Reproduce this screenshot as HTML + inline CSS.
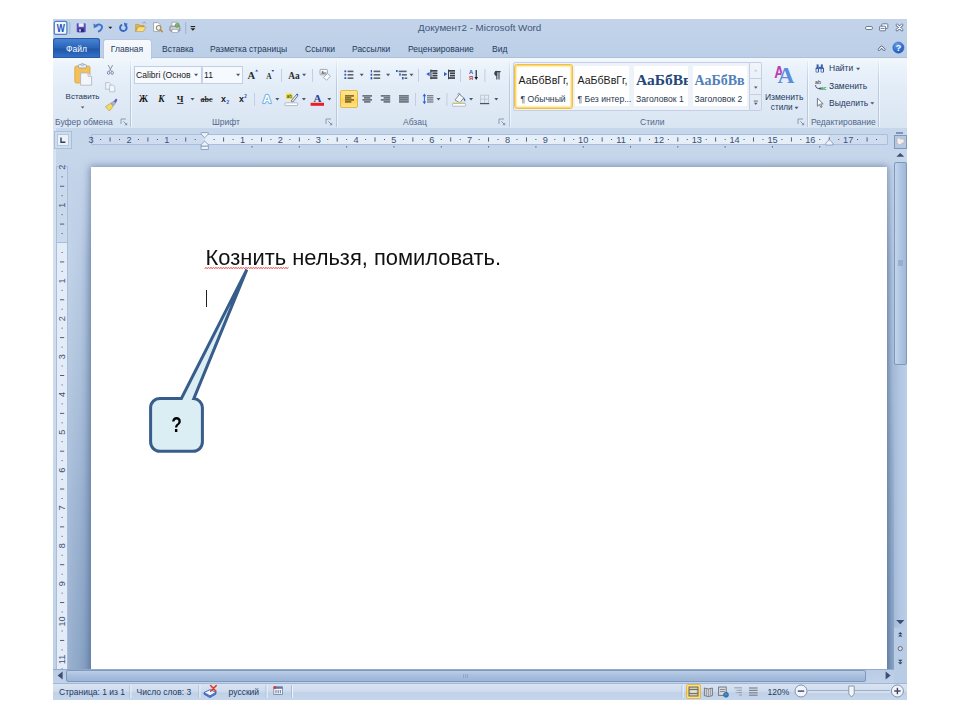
<!DOCTYPE html>
<html lang="ru">
<head>
<meta charset="utf-8">
<title>Документ2 - Microsoft Word</title>
<style>
html,body{margin:0;padding:0;}
body{width:960px;height:720px;background:#fff;position:relative;overflow:hidden;font-family:"Liberation Sans","DejaVu Sans",sans-serif;font-size:9px;color:#1e395b;}
.abs{position:absolute;}
#win{position:absolute;left:53px;top:19px;width:854px;height:681px;background:#bdd0e8;overflow:hidden;}
/* all children of #win positioned in page coordinates via this wrapper */
#w{position:absolute;left:-53px;top:-19px;width:960px;height:720px;}
#titlebar{left:53px;top:19px;width:854px;height:39px;background:linear-gradient(#c3d4ea,#bccfe7);}
#title{left:418px;top:23.2px;font-size:9.8px;color:#41587c;}
.tab{z-index:2;top:39px;height:20px;line-height:20px;font-size:8.5px;color:#1e395b;text-align:center;white-space:nowrap;}
#filetab{left:53px;width:47px;top:38px;height:20px;line-height:22px;border-radius:3px 3px 0 0;background:linear-gradient(#4a86d6 0%,#2a63b8 50%,#1f55a8 55%,#3474cc 100%);color:#fff;box-shadow:inset 0 0 0 1px #2a5aa5;}
#hometab{z-index:1;left:103px;width:48.5px;top:38.5px;height:20.5px;background:linear-gradient(#f6f9fd,#f0f5fb);border:1px solid #b5c8e1;border-bottom:none;border-radius:3px 3px 0 0;box-sizing:border-box;}
#ribbon{left:53px;top:57px;width:854px;height:71.5px;background:linear-gradient(#f3f8fd 0%,#eaf2fb 12%,#e3edf8 40%,#d9e5f2 100%);border-top:1px solid #a9bfdb;border-bottom:1px solid #9db3d1;box-sizing:border-box;}
.gsep{top:61px;width:1px;height:66px;background:linear-gradient(rgba(170,190,218,0.15),#bccbe1 35%,#b7c8df 85%,#b4c6de);box-shadow:1px 0 0 rgba(255,255,255,0.55);}
.glabel{top:116px;height:12px;line-height:12px;font-size:8.5px;color:#52688a;text-align:center;white-space:nowrap;}
.t{white-space:nowrap;line-height:1;}
</style>
</head>
<body>
<div id="win"><div id="w">
<!-- TITLE BAR -->
<div id="titlebar" class="abs"></div>
<div id="title" class="abs t">Документ2 - Microsoft Word</div>
<!-- QAT icons -->
<svg class="abs" style="left:53px;top:19px" width="150" height="20" viewBox="0 0 150 20">
  <!-- W logo -->
  <rect x="1.3" y="2.4" width="12.6" height="13" rx="1.6" fill="#f4f8fd" stroke="#5580c4" stroke-width="1.3"/>
  <text transform="translate(7.8 12.7) scale(0.86 1)" font-family="Liberation Sans, sans-serif" font-weight="bold" font-size="10" fill="#1b55b8" text-anchor="middle">W</text>
  <rect x="16.3" y="3" width="1" height="12" fill="#9fb4d2"/>
  <!-- save -->
  <g transform="translate(0.2 -0.8)">
  <rect x="23.5" y="5" width="9" height="9" rx="0.8" fill="#5a4fc0"/>
  <rect x="25.5" y="5" width="5" height="3.6" fill="#eef1fb"/>
  <rect x="25.3" y="10.3" width="5.4" height="3.7" fill="#2a2a78"/>
  <rect x="26" y="11" width="1.6" height="2.4" fill="#dfe3f5"/>
  </g>
  <!-- undo -->
  <path d="M43.6 6.2 C46.6 4.6 49.8 6.4 48.8 9.2 C48.3 10.6 47.3 11.6 45.8 12.4" fill="none" stroke="#3d74cf" stroke-width="1.9" stroke-linecap="round"/>
  <path d="M40.4 4.4 L40.9 9.2 L45.2 7.2 Z" fill="#3d74cf"/>
  <path d="M55.3 7.8 h4 l-2 2.3 z" fill="#222"/>
  <!-- redo -->
  <g transform="translate(1.3 -0.6)">
  <path d="M67.2 6.6 A3.3 3.3 0 1 0 71.3 6.9" fill="none" stroke="#3469c7" stroke-width="1.9" stroke-linecap="round"/>
  <path d="M69.6 4.3 L73.5 5.3 L70.6 8.5 Z" fill="#3469c7"/>
  </g>
  <!-- open folder -->
  <g transform="translate(0.2 -1.1)">
  <path d="M82.5 13.5 v-7 h3.2 l1 1.2 h4 v1.5 h-6.3 z" fill="#e3b84a" stroke="#b98a22" stroke-width="0.6"/>
  <path d="M82.6 13.6 l2.4 -4.6 h7.6 l-2.4 4.6 z" fill="#f8df87" stroke="#c19a33" stroke-width="0.6"/>
  <path d="M89.2 5.4 c1.4 -1.6 3 -1.2 3.4 0.2" fill="none" stroke="#7a8db0" stroke-width="0.8"/>
  </g>
  <!-- preview -->
  <g transform="translate(-0.9 -0.8) translate(101 4) scale(0.92) translate(-101 -4)">
  <path d="M101.5 4.5 h5 l2 2 v7.5 h-7 z" fill="#fdfdfd" stroke="#8b99ad" stroke-width="0.8"/>
  <circle cx="107" cy="10.2" r="2.6" fill="#e9f1fb" stroke="#8a6d2f" stroke-width="1"/>
  <path d="M109 12.2 l2 2.2" stroke="#b58a2a" stroke-width="1.5" stroke-linecap="round"/>
  </g>
  <!-- quick print -->
  <g transform="translate(-0.6 -1.3)">
  <rect x="117.5" y="8.4" width="10" height="5" rx="1" fill="#c9cdd6" stroke="#6f7785" stroke-width="0.8"/>
  <path d="M119.5 8.3 v-3.8 h5.5 l1 1 v2.8 z" fill="#fff" stroke="#8b93a3" stroke-width="0.7"/>
  <rect x="119.6" y="11.6" width="6" height="3.2" fill="#fff" stroke="#8b93a3" stroke-width="0.6"/>
  <circle cx="124.8" cy="7.6" r="2.1" fill="#7bb661" stroke="#4b8a3a" stroke-width="0.5"/>
  </g>
  <rect x="132.2" y="3" width="1" height="12" fill="#9fb4d2"/>
  <!-- customize -->
  <rect x="137.6" y="7" width="4.6" height="1.1" fill="#222"/>
  <path d="M137.4 9.2 h5 l-2.5 2.6 z" fill="#222"/>
</svg>
<!-- window controls -->
<svg class="abs" style="left:860px;top:19px" width="47" height="39" viewBox="0 0 47 39">
  <rect x="5.5" y="7.5" width="7" height="3" rx="1.4" fill="#fff" stroke="#5d6f8c" stroke-width="0.9"/>
  <rect x="21.8" y="4.8" width="6" height="4.6" rx="0.6" fill="#fff" stroke="#5d6f8c" stroke-width="0.9"/>
  <rect x="19.6" y="7.2" width="6" height="4.6" rx="0.6" fill="#fff" stroke="#5d6f8c" stroke-width="0.9"/>
  <rect x="20.6" y="8.9" width="4" height="0.9" fill="#5d6f8c"/>
  <path d="M37 5.9 L42 10.9 M42 5.9 L37 10.9" stroke="#5d6f8c" stroke-width="2.8" stroke-linecap="round"/>
  <path d="M37 5.9 L42 10.9 M42 5.9 L37 10.9" stroke="#fff" stroke-width="1.3" stroke-linecap="round"/>
  <path d="M19 30.6 L21.6 28 L24.2 30.6" fill="none" stroke="#4d5f7c" stroke-width="2.6" stroke-linecap="round" stroke-linejoin="round"/>
  <path d="M19 30.6 L21.6 28 L24.2 30.6" fill="none" stroke="#fff" stroke-width="1.1" stroke-linecap="round" stroke-linejoin="round"/>
  <defs><radialGradient id="hg" cx="0.4" cy="0.3" r="0.8"><stop offset="0" stop-color="#6fa3ea"/><stop offset="0.6" stop-color="#2f6fd0"/><stop offset="1" stop-color="#1d4fa8"/></radialGradient></defs>
  <circle cx="38.4" cy="28.6" r="5.6" fill="url(#hg)" stroke="#2a5db5" stroke-width="0.5"/>
  <text x="38.4" y="32" font-family="Liberation Sans, sans-serif" font-weight="bold" font-size="9" fill="#fff" text-anchor="middle">?</text>
</svg>

<!--TABS-->
<div id="filetab" class="abs tab">Файл</div>
<div id="hometab" class="abs"></div>
<div class="abs tab" style="left:103px;width:48px;">Главная</div>
<div class="abs tab" style="left:162px;">Вставка</div>
<div class="abs tab" style="left:210px;">Разметка страницы</div>
<div class="abs tab" style="left:305px;">Ссылки</div>
<div class="abs tab" style="left:352px;">Рассылки</div>
<div class="abs tab" style="left:408px;">Рецензирование</div>
<div class="abs tab" style="left:492px;">Вид</div>
<!--RIBBON-->
<div id="ribbon" class="abs"></div>
<!-- group separators -->
<div class="abs gsep" style="left:130px"></div>
<div class="abs gsep" style="left:336.3px"></div>
<div class="abs gsep" style="left:509px"></div>
<div class="abs gsep" style="left:807px"></div>
<div class="abs gsep" style="left:878px"></div>
<!-- group labels -->
<div class="abs glabel" style="left:55px">Буфер обмена</div>
<div class="abs glabel" style="left:212px">Шрифт</div>
<div class="abs glabel" style="left:403px">Абзац</div>
<div class="abs glabel" style="left:640px">Стили</div>
<div class="abs glabel" style="left:811px">Редактирование</div>
<!-- dialog launchers -->
<svg class="abs" style="left:0;top:0;pointer-events:none" width="960" height="130" viewBox="0 0 960 130">
  <g id="launch" fill="none" stroke="#8393ab" stroke-width="0.9">
    <path d="M0 5 V0 H5"/><path d="M2.4 2.4 L5.6 5.6" stroke-width="1"/><path d="M6.2 3.4 V6.2 H3.4 Z" fill="#8393ab" stroke="none"/>
  </g>
  <use href="#launch" x="121" y="119"/>
  <use href="#launch" x="326" y="119"/>
  <use href="#launch" x="499" y="119"/>
  <use href="#launch" x="798" y="119"/>
</svg>
<!-- CLIPBOARD GROUP -->
<svg class="abs" style="left:53px;top:58px" width="80" height="70" viewBox="0 0 80 70">
  <!-- paste clipboard -->
  <rect x="21.8" y="8" width="15.2" height="17" rx="1.6" fill="#f3c15b" stroke="#d9a23c" stroke-width="0.8"/>
  <rect x="25.4" y="6.6" width="8" height="3.4" rx="1" fill="#e9edf2" stroke="#8d97a6" stroke-width="0.7"/>
  <rect x="28" y="5.4" width="2.8" height="2" rx="0.8" fill="#cfd6df" stroke="#8d97a6" stroke-width="0.5"/>
  <path d="M27.6 15 h7.4 l3.6 3.6 v8.6 h-11 z" fill="#f4f6fa" stroke="#aab3c2" stroke-width="0.8"/>
  <path d="M35 15 v3.6 h3.6" fill="#dfe4ec" stroke="#aab3c2" stroke-width="0.6"/>
  <!-- paste arrow -->
  <path d="M27.8 48.4 h3.6 l-1.8 2.2 z" fill="#4a566b"/>
  <!-- cut -->
  <g transform="translate(0 -2.4)">
  <g stroke="#8b95a6" fill="none" stroke-width="1">
    <path d="M55.2 9.4 L58.4 15.6 M59.6 9.4 L56.4 15.6"/>
    <ellipse cx="55.6" cy="17.2" rx="1.2" ry="1.6" stroke="#7f8ba8"/>
    <ellipse cx="59.2" cy="17.2" rx="1.2" ry="1.6" stroke="#7f8ba8"/>
  </g>
  </g>
  <!-- copy -->
  <g transform="translate(0 -2.4)">
  <path d="M52.6 27 h3.6 l1.6 1.6 v5 h-5.2 z" fill="#eef1f6" stroke="#a9b3c4" stroke-width="0.7"/>
  <path d="M56.6 29.6 h3.6 l1.6 1.6 v5 h-5.2 z" fill="#f4f6fa" stroke="#a9b3c4" stroke-width="0.7"/>
  </g>
  <!-- format painter -->
  <path d="M52.4 48.6 l5.4 -3.4 l2.4 3.2 l-3.8 4.6 z" fill="#f2d76a" stroke="#b9992f" stroke-width="0.6"/>
  <path d="M58 45 l2.6 -1.8 l1.8 2.6 l-2.4 2 z" fill="#aeb4c2" stroke="#7d8597" stroke-width="0.5"/>
  <path d="M60.8 43.2 l2.2 -2.6 l1.4 1.2 l-1.6 3.2 z" fill="#5b55b8"/>
</svg>
<div class="abs t" style="left:65.6px;top:93.2px;font-size:8px;color:#1e395b">Вставить</div>
<!-- FONT GROUP -->
<div class="abs" style="left:133.6px;top:66px;width:68px;height:18px;box-sizing:border-box;border:1px solid #c0cfe4;background:#f6f9fd;"></div>
<div class="abs" style="left:201.6px;top:66px;width:41.4px;height:18px;box-sizing:border-box;border:1px solid #c0cfe4;border-left:1px solid #c9d6e8;background:#f6f9fd;"></div>
<div class="abs t" style="left:136px;top:70.5px;font-size:8.6px;color:#1a1a1a">Calibri (Основ</div>
<div class="abs t" style="left:204px;top:70.5px;font-size:8.6px;color:#1a1a1a">11</div>
<svg class="abs" style="left:131px;top:58px" width="206" height="70" viewBox="0 0 206 70">
  <g fill="#4a566b">
    <path d="M63.1 15.8 h4 l-2 2.4 z"/>
    <path d="M105.1 15.8 h4 l-2 2.4 z"/>
    <path d="M59.5 40.0 h4 l-2 2.4 z"/>
    <path d="M144.3 40.0 h4 l-2 2.4 z"/>
    <path d="M170.9 40.0 h4 l-2 2.4 z"/>
    <path d="M196.3 40.0 h4 l-2 2.4 z"/>
    <path d="M171.1 15.8 h4 l-2 2.4 z"/>
  </g>
  <!-- small separators -->
  <g fill="#c2cfe2">
    <rect x="150" y="11" width="1" height="13"/>
    <rect x="181" y="11" width="1" height="13"/>
    <rect x="123" y="35" width="1" height="13"/>
  </g>
  <!-- grow/shrink font -->
  <text x="120.4" y="21.2" font-family="Liberation Serif, serif" font-weight="bold" font-size="10.6" fill="#2b2b2b" text-anchor="middle">A</text>
  <path d="M124.2 13.6 h3 l-1.5 -2 z" fill="#2f55b5"/>
  <text x="137.8" y="21.2" font-family="Liberation Serif, serif" font-weight="bold" font-size="7.4" fill="#2b2b2b" text-anchor="middle">A</text>
  <path d="M140.4 12 h3 l-1.5 2 z" fill="#2f55b5"/>
  <!-- Aa -->
  <text x="163" y="20.8" font-family="Liberation Serif, serif" font-weight="bold" font-size="9.4" fill="#2b2b2b" text-anchor="middle">Aa</text>
  <!-- clear formatting -->
  <rect x="189" y="11.4" width="7.4" height="5.4" rx="0.8" fill="#f6f8fc" stroke="#7f8aa0" stroke-width="0.7"/>
  <text x="192.7" y="15.8" font-family="Liberation Sans, sans-serif" font-size="4.2" fill="#333" text-anchor="middle">Aa</text>
  <path d="M192.4 19.6 l4 -4 l3 2.4 l-3.6 4.2 z" fill="#fdfdfd" stroke="#8a93a8" stroke-width="0.7"/>
  <!-- B I U -->
  <text x="12.3" y="44.4" font-family="Liberation Serif, serif" font-weight="bold" font-size="9.4" fill="#1a1a1a" text-anchor="middle">Ж</text>
  <text x="30.4" y="44.4" font-family="Liberation Serif, serif" font-weight="bold" font-style="italic" font-size="9.4" fill="#1a1a1a" text-anchor="middle">К</text>
  <text x="49.2" y="43.6" font-family="Liberation Serif, serif" font-weight="bold" font-size="9.2" fill="#1a1a1a" text-anchor="middle">Ч</text>
  <rect x="46" y="44.9" width="6.4" height="0.9" fill="#1a1a1a"/>
  <!-- strikethrough abc -->
  <text x="75.6" y="44.2" font-family="Liberation Serif, serif" font-weight="bold" font-size="8" fill="#2b2b2b" text-anchor="middle">abc</text>
  <rect x="69.6" y="41" width="12" height="0.8" fill="#2b2b2b"/>
  <!-- sub/superscript -->
  <text x="92.4" y="44.2" font-family="Liberation Sans, sans-serif" font-weight="bold" font-size="8.8" fill="#1a1a1a" text-anchor="middle">x</text>
  <text x="96.8" y="46" font-family="Liberation Sans, sans-serif" font-weight="bold" font-size="4.6" fill="#2f55b5" text-anchor="middle">2</text>
  <text x="110.4" y="44.2" font-family="Liberation Sans, sans-serif" font-weight="bold" font-size="8.8" fill="#1a1a1a" text-anchor="middle">x</text>
  <text x="114.6" y="40.4" font-family="Liberation Sans, sans-serif" font-weight="bold" font-size="4.6" fill="#2f55b5" text-anchor="middle">2</text>
  <!-- text effects A -->
  <text x="136" y="45.4" font-family="Liberation Sans, sans-serif" font-weight="bold" font-size="11.6" fill="#b9dcf5" stroke="#b9dcf5" stroke-width="3.2" text-anchor="middle" stroke-linejoin="round" opacity="0.55">A</text><text x="136" y="45.4" font-family="Liberation Sans, sans-serif" font-weight="bold" font-size="11.6" fill="#ffffff" stroke="#62a8e0" stroke-width="1.7" paint-order="stroke" text-anchor="middle" stroke-linejoin="round">A</text>
  <!-- highlight -->
  <rect x="155" y="35.6" width="6.6" height="5.4" fill="#f1e434"/>
  <text x="158.3" y="40.2" font-family="Liberation Sans, sans-serif" font-size="5" fill="#333" text-anchor="middle">ab</text>
  <path d="M160 43 l5.6 -6.6 l1.4 1.2 l-5.2 6.4 z" fill="#e6eaf2" stroke="#3d4f78" stroke-width="0.7"/>
  <path d="M165 36.6 l1.2 -1.2 l1.2 1 l-1 1.4 z" fill="#3763c2"/>
  <rect x="154" y="44.8" width="12.6" height="2.8" rx="0.6" fill="#fdfdfd" stroke="#9aa3b3" stroke-width="0.7"/>
  <!-- font color -->
  <text x="186.4" y="43.6" font-family="Liberation Serif, serif" font-weight="bold" font-size="11" fill="#24448c" text-anchor="middle">A</text>
  <rect x="179.6" y="44.8" width="13.4" height="3" fill="#ee1c25"/>
</svg>

<!-- PARAGRAPH GROUP -->
<div class="abs" style="left:340px;top:90px;width:18px;height:18px;box-sizing:border-box;border:1px solid #e5b84a;border-radius:2px;background:linear-gradient(#fde68f,#fddb70 45%,#fcd258 52%,#fde286);"></div>
<svg class="abs" style="left:336px;top:58px" width="174" height="70" viewBox="0 0 174 70">
  <g fill="#4a566b">
    <path d="M23.7 15.8 h4 l-2 2.4 z"/>
    <path d="M50.1 15.8 h4 l-2 2.4 z"/>
    <path d="M73.5 15.8 h4 l-2 2.4 z"/>
    <path d="M100.5 40.0 h4 l-2 2.4 z"/>
    <path d="M133.1 40.0 h4 l-2 2.4 z"/>
    <path d="M158.3 40.0 h4 l-2 2.4 z"/>
  </g>
  <g fill="#c2cfe2">
    <rect x="82" y="11" width="1" height="13"/>
    <rect x="124" y="11" width="1" height="13"/>
    <rect x="148.4" y="11" width="1" height="13"/>
    <rect x="79" y="35" width="1" height="13"/>
    <rect x="110.4" y="35" width="1" height="13"/>
  </g>
  <!-- bullets -->
  <g fill="#2f55b5"><rect x="8.4" y="12.4" width="1.8" height="1.8"/><rect x="8.4" y="15.8" width="1.8" height="1.8"/><rect x="8.4" y="19.2" width="1.8" height="1.8"/></g>
  <g fill="#5d6470"><rect x="11.6" y="12.6" width="5.8" height="1.6"/><rect x="11.6" y="16" width="5.8" height="1.6"/><rect x="11.6" y="19.4" width="5.8" height="1.6"/></g>
  <!-- numbering -->
  <g fill="#2f55b5"><rect x="34.8" y="12" width="1.2" height="2.4"/><rect x="34.6" y="15.6" width="1.6" height="2.2"/><rect x="34.6" y="19" width="1.6" height="2.4"/></g>
  <g fill="#5d6470"><rect x="37.6" y="12.6" width="6.6" height="1.6"/><rect x="37.6" y="16" width="6.6" height="1.6"/><rect x="37.6" y="19.4" width="6.6" height="1.6"/></g>
  <!-- multilevel -->
  <g fill="#2f55b5"><rect x="60" y="12" width="1.6" height="2"/><rect x="63.2" y="15.4" width="1.6" height="2.2"/><rect x="66" y="19" width="1.6" height="2.4"/></g>
  <g fill="#5d6470"><rect x="62.6" y="12.6" width="8" height="1.6"/><rect x="65.8" y="16" width="5" height="1.6"/><rect x="68.6" y="19.4" width="2.6" height="1.6"/></g>
  <!-- outdent -->
  <g fill="#3f434c"><rect x="94.4" y="12" width="7" height="1.7"/><rect x="96.4" y="14.4" width="5" height="1.7"/><rect x="96.4" y="16.8" width="5" height="1.7"/><rect x="94.4" y="19.2" width="7" height="1.7"/><rect x="94.4" y="11.6" width="1.1" height="9.6"/></g>
  <path d="M93.6 13.9 v4.4 l-3.4 -2.2 z" fill="#2a62d8"/>
  <!-- indent -->
  <g fill="#3f434c"><rect x="112" y="12" width="7" height="1.7"/><rect x="114" y="14.4" width="5" height="1.7"/><rect x="114" y="16.8" width="5" height="1.7"/><rect x="112" y="19.2" width="7" height="1.7"/><rect x="112" y="11.6" width="1.1" height="9.6"/></g>
  <path d="M108 13.9 v4.4 l3.4 -2.2 z" fill="#2a62d8"/>
  <!-- sort -->
  <text x="135" y="16.4" font-family="Liberation Sans, sans-serif" font-weight="bold" font-size="5.8" fill="#2f55b5" text-anchor="middle">А</text>
  <text x="135" y="22" font-family="Liberation Sans, sans-serif" font-weight="bold" font-size="5.8" fill="#b33a3a" text-anchor="middle">Я</text>
  <path d="M140.2 12 v8" stroke="#1a1a1a" stroke-width="1.1"/><path d="M138.4 19 h3.6 l-1.8 3 z" fill="#1a1a1a"/>
  <!-- pilcrow -->
  <g transform="translate(-1.2 0.6)"><path d="M162 21 v-8 M164.2 21 v-8 M160.4 13 h5.4" stroke="#3d424c" stroke-width="1.1" fill="none"/>
  <path d="M162 12.5 a2.3 2.3 0 0 0 0 4.6 z" fill="#3d424c" stroke="#3d424c" stroke-width="0.6"/></g>
  <!-- align left (selected) -->
  <g fill="#6b5520"><rect x="9" y="37.2" width="9" height="1.4"/><rect x="9" y="39.2" width="6.4" height="1.4"/><rect x="9" y="41.2" width="9" height="1.4"/><rect x="9" y="43.2" width="6.4" height="1.4"/></g>
  <!-- center -->
  <g fill="#555b66"><rect x="26.4" y="37.2" width="9.6" height="1.4"/><rect x="28" y="39.2" width="6.4" height="1.4"/><rect x="26.4" y="41.2" width="9.6" height="1.4"/><rect x="28" y="43.2" width="6.4" height="1.4"/></g>
  <!-- right -->
  <g fill="#555b66"><rect x="44.8" y="37.2" width="9.4" height="1.4"/><rect x="47.6" y="39.2" width="6.6" height="1.4"/><rect x="44.8" y="41.2" width="9.4" height="1.4"/><rect x="47.6" y="43.2" width="6.6" height="1.4"/></g>
  <!-- justify -->
  <g fill="#555b66"><rect x="63" y="37.2" width="9.8" height="1.4"/><rect x="63" y="39.2" width="9.8" height="1.4"/><rect x="63" y="41.2" width="9.8" height="1.4"/><rect x="63" y="43.2" width="9.8" height="1.4"/></g>
  <!-- line spacing -->
  <g fill="#7d838e"><rect x="91" y="37.0" width="6.4" height="1.4"/><rect x="91" y="39.1" width="6.4" height="1.4"/><rect x="91" y="41.2" width="6.4" height="1.4"/><rect x="91" y="43.3" width="6.4" height="1.4"/></g>
  <path d="M88.4 35.6 l1.8 2.6 h-3.6 z M88.4 46.2 l1.8 -2.6 h-3.6 z" fill="#2a62d8"/><rect x="87.9" y="38" width="1" height="6" fill="#2a62d8"/>
  <!-- shading -->
  <path d="M119 42 l4.4 -5.6 l4.4 3.4 l-4 5 z" fill="#f4f6fa" stroke="#6a7487" stroke-width="0.8"/>
  <path d="M127.6 40 c1.6 0.4 2 2 1.6 3.6 c-1 -0.8 -2 -2 -1.6 -3.6z" fill="#2a62d8"/>
  <path d="M121.6 36.8 c0.4 -2 2.6 -2 2.6 0" fill="none" stroke="#6a7487" stroke-width="0.7"/>
  <rect x="117" y="44.4" width="12" height="1.2" fill="#f1e434"/>
  <rect x="116.4" y="45.4" width="13.2" height="2.8" rx="0.6" fill="#fdfdfd" stroke="#9aa3b3" stroke-width="0.7"/>
  <!-- borders -->
  <g stroke="#b9c1ce" stroke-width="0.8" fill="none"><rect x="144.6" y="37.2" width="8" height="8"/><path d="M148.6 37.2 v8 M144.6 41.2 h8"/></g>
  <rect x="144" y="45" width="9.2" height="1.2" fill="#4d525c"/>
</svg>
<!-- STYLES GROUP -->
<div class="abs" style="left:513px;top:62px;width:237px;height:49px;box-sizing:border-box;border:1px solid #c3d0e4;border-radius:2px 0 0 2px;background:#eef3fa;"></div>
<div class="abs" style="left:514px;top:63.5px;width:58.6px;height:45px;box-sizing:border-box;border:1.2px solid #efbe42;border-radius:2.5px;background:#fff;box-shadow:inset 0 0 0 1.3px #fbd96e, inset 0 0 3px 1px #fde9a8;"></div>
<div class="abs" style="left:575px;top:66px;width:54px;height:40px;background:#fff;"></div>
<div class="abs" style="left:634px;top:66px;width:54px;height:40px;background:#fff;overflow:hidden"><div class="abs t" style="left:2px;top:6px;font-family:'Liberation Serif','DejaVu Serif',serif;font-weight:bold;font-size:15.5px;color:#1f497d;">АаБбВв</div></div>
<div class="abs" style="left:692.5px;top:66px;width:54px;height:40px;background:#fff;overflow:hidden"><div class="abs t" style="left:2px;top:7.5px;font-family:'Liberation Serif','DejaVu Serif',serif;font-weight:bold;font-size:14px;color:#4f81bd;">АаБбВв</div></div>
<div class="abs" style="left:516px;top:66px;width:55px;height:40px;overflow:hidden"><div class="abs t" style="left:2.5px;top:9px;font-size:10.6px;color:#1a1a1a;">АаБбВвГг,</div></div>
<div class="abs" style="left:575px;top:66px;width:54px;height:40px;overflow:hidden"><div class="abs t" style="left:2.5px;top:9px;font-size:10.6px;color:#1a1a1a;">АаБбВвГг,</div></div>
<div class="abs t" style="left:520.5px;top:94.8px;font-size:8.65px;color:#2b3a52;">¶ Обычный</div>
<div class="abs t" style="left:577.5px;top:94.8px;font-size:8.65px;color:#2b3a52;">¶ Без интер...</div>
<div class="abs t" style="left:636px;top:94.8px;font-size:8.65px;color:#2b3a52;">Заголовок 1</div>
<div class="abs t" style="left:694.5px;top:94.8px;font-size:8.65px;color:#2b3a52;">Заголовок 2</div>
<!-- gallery scroll buttons -->
<div class="abs" style="left:750px;top:62px;width:11.5px;height:49px;box-sizing:border-box;border:1px solid #c3d0e4;border-left:none;border-radius:0 2px 2px 0;background:linear-gradient(#f1f5fb,#dfe8f4);"></div>
<div class="abs" style="left:750px;top:78px;width:11px;height:1px;background:#c3d0e4"></div>
<div class="abs" style="left:750px;top:94px;width:11px;height:1px;background:#c3d0e4"></div>
<svg class="abs" style="left:750px;top:62px" width="12" height="49" viewBox="0 0 12 49">
  <path d="M4 9.4 h3.6 l-1.8 -2.2 z" fill="#c5cddb"/>
  <path d="M4 24.6 h3.6 l-1.8 2.2 z" fill="#4d596d"/>
  <rect x="3.8" y="38.6" width="4" height="0.9" fill="#4d596d"/>
  <path d="M4 40.8 h3.6 l-1.8 2.2 z" fill="#4d596d"/>
</svg>
<!-- change styles -->
<svg class="abs" style="left:770px;top:62px" width="30" height="26" viewBox="0 0 30 26">
  <text transform="translate(9.2 16) scale(0.78 1)" font-family="Liberation Sans, sans-serif" font-weight="bold" font-size="17.4" fill="#b63fb4" text-anchor="middle">A</text>
  <text x="16" y="21.4" font-family="Liberation Serif, serif" font-weight="bold" font-size="23.4" fill="#5a8ddb" stroke="#eef4fb" stroke-width="0.7" paint-order="stroke" text-anchor="middle">A</text>
</svg>
<div class="abs t" style="left:765px;top:92.6px;font-size:8.5px;color:#1e395b">Изменить</div>
<div class="abs t" style="left:770.8px;top:103.6px;font-size:8.2px;color:#1e395b">стили</div>
<svg class="abs" style="left:794px;top:106px" width="6" height="5" viewBox="0 0 6 5"><path d="M0.5 0.8 h4 l-2 2.4 z" fill="#4a566b"/></svg>
<!-- EDITING GROUP -->
<div class="abs t" style="left:829px;top:64.4px;font-size:8.5px;color:#1e395b">Найти</div>
<div class="abs t" style="left:829px;top:81.6px;font-size:8.5px;color:#1e395b">Заменить</div>
<div class="abs t" style="left:829px;top:98.6px;font-size:8.5px;color:#1e395b">Выделить</div>
<svg class="abs" style="left:812px;top:60px" width="66" height="52" viewBox="0 0 66 52">
  <path d="M44.1 7.8 h4 l-2 2.4 z M58.3 42.2 h4 l-2 2.4 z" fill="#4a566b"/>
  <!-- binoculars -->
  <g fill="#3d5ea8"><rect x="3.6" y="7.6" width="3.4" height="5" rx="0.8"/><rect x="8.6" y="7.6" width="3.4" height="5" rx="0.8"/><rect x="4.6" y="4.4" width="2" height="4"/><rect x="8.8" y="4.4" width="2" height="4"/><rect x="6.6" y="6.8" width="2.4" height="2"/></g>
  <rect x="4.4" y="9" width="1.6" height="2.8" fill="#dfe8f7"/><rect x="9.4" y="9" width="1.6" height="2.8" fill="#dfe8f7"/>
  <!-- replace -->
  <text x="6" y="23.6" font-family="Liberation Sans, sans-serif" font-size="5.4" fill="#333" text-anchor="middle">ab</text>
  <path d="M3.6 25 c0 3 1.6 3.6 4.4 3.6" fill="none" stroke="#3d4a66" stroke-width="0.9"/>
  <path d="M7.6 27 l2 1.6 l-2 1.6 z" fill="#3d4a66"/>
  <text x="11.6" y="30.4" font-family="Liberation Sans, sans-serif" font-weight="bold" font-size="5" fill="#2f9a3a" text-anchor="middle">ac</text>
  <!-- select cursor -->
  <path d="M5.4 38.2 v8 l2 -1.8 l1.5 3.1 l1.2 -0.6 l-1.5 -3 h2.6 z" fill="#fff" stroke="#555e70" stroke-width="0.8" stroke-linejoin="round"/>
</svg>

<!--RULER_START-->
<div class="abs" style="left:53px;top:128px;width:854px;height:24px;background:#c6d6eb;"></div>
<div class="abs" style="left:53px;top:150px;width:841px;height:519px;background:linear-gradient(#c6d6eb 0%,#bed0e7 14%,#aec3dd 40%,#9ab2d1 70%,#8ba5c7 100%);"></div>
<div class="abs" style="left:68px;top:167px;width:23px;height:502px;-webkit-mask-image:linear-gradient(rgba(0,0,0,0),#000 90px);mask-image:linear-gradient(rgba(0,0,0,0),#000 90px);background:linear-gradient(90deg,rgba(255,255,255,0.14),rgba(255,255,255,0) 55%,rgba(50,80,130,0.16));"></div>
<div class="abs" style="left:887px;top:167px;width:7px;height:502px;-webkit-mask-image:linear-gradient(rgba(0,0,0,0),#000 90px);mask-image:linear-gradient(rgba(0,0,0,0),#000 90px);background:linear-gradient(90deg,rgba(50,80,130,0.18),rgba(50,80,130,0));"></div>
<div class="abs" style="left:53px;top:128px;width:3px;height:541px;background:linear-gradient(#dbe6f4,#c9d8ec);opacity:.85"></div>
<div class="abs" style="left:91px;top:167px;width:795.5px;height:520px;background:#fff;box-shadow:0 0 7px 1px rgba(60,85,125,0.55);"></div>
<div class="abs" style="left:91px;top:134px;width:796.5px;height:11px;box-sizing:border-box;background:#cfdcef;border:1px solid #a9bedb;border-radius:1px;"></div>
<div class="abs" style="left:205px;top:135px;width:624px;height:9px;background:#e6eef8;"></div>
<svg class="abs" style="left:53px;top:128px" width="854" height="24" viewBox="53 128 854 24">
<text x="91.1" y="142.7" font-family="Liberation Sans, sans-serif" font-size="9.2" fill="#3d5078" text-anchor="middle">3</text>
<rect x="100.11" y="139" width="1" height="1" fill="#3d5078"/>
<rect x="109.62" y="137.4" width="0.9" height="4.2" fill="#3d5078"/>
<rect x="119.04" y="139" width="1" height="1" fill="#3d5078"/>
<text x="129.0" y="142.7" font-family="Liberation Sans, sans-serif" font-size="9.2" fill="#3d5078" text-anchor="middle">2</text>
<rect x="137.96" y="139" width="1" height="1" fill="#3d5078"/>
<rect x="147.47" y="137.4" width="0.9" height="4.2" fill="#3d5078"/>
<rect x="156.89" y="139" width="1" height="1" fill="#3d5078"/>
<text x="166.8" y="142.7" font-family="Liberation Sans, sans-serif" font-size="9.2" fill="#3d5078" text-anchor="middle">1</text>
<rect x="175.81" y="139" width="1" height="1" fill="#3d5078"/>
<rect x="185.32" y="137.4" width="0.9" height="4.2" fill="#3d5078"/>
<rect x="194.74" y="139" width="1" height="1" fill="#3d5078"/>
<rect x="213.66" y="139" width="1" height="1" fill="#3d5078"/>
<rect x="223.18" y="137.4" width="0.9" height="4.2" fill="#3d5078"/>
<rect x="232.59" y="139" width="1" height="1" fill="#3d5078"/>
<text x="242.5" y="142.7" font-family="Liberation Sans, sans-serif" font-size="9.2" fill="#3d5078" text-anchor="middle">1</text>
<rect x="251.51" y="139" width="1" height="1" fill="#3d5078"/>
<rect x="261.03" y="137.4" width="0.9" height="4.2" fill="#3d5078"/>
<rect x="270.44" y="139" width="1" height="1" fill="#3d5078"/>
<text x="280.4" y="142.7" font-family="Liberation Sans, sans-serif" font-size="9.2" fill="#3d5078" text-anchor="middle">2</text>
<rect x="289.36" y="139" width="1" height="1" fill="#3d5078"/>
<rect x="298.88" y="137.4" width="0.9" height="4.2" fill="#3d5078"/>
<rect x="308.29" y="139" width="1" height="1" fill="#3d5078"/>
<text x="318.2" y="142.7" font-family="Liberation Sans, sans-serif" font-size="9.2" fill="#3d5078" text-anchor="middle">3</text>
<rect x="327.21" y="139" width="1" height="1" fill="#3d5078"/>
<rect x="336.72" y="137.4" width="0.9" height="4.2" fill="#3d5078"/>
<rect x="346.14" y="139" width="1" height="1" fill="#3d5078"/>
<text x="356.1" y="142.7" font-family="Liberation Sans, sans-serif" font-size="9.2" fill="#3d5078" text-anchor="middle">4</text>
<rect x="365.06" y="139" width="1" height="1" fill="#3d5078"/>
<rect x="374.57" y="137.4" width="0.9" height="4.2" fill="#3d5078"/>
<rect x="383.99" y="139" width="1" height="1" fill="#3d5078"/>
<text x="393.9" y="142.7" font-family="Liberation Sans, sans-serif" font-size="9.2" fill="#3d5078" text-anchor="middle">5</text>
<rect x="402.91" y="139" width="1" height="1" fill="#3d5078"/>
<rect x="412.43" y="137.4" width="0.9" height="4.2" fill="#3d5078"/>
<rect x="421.84" y="139" width="1" height="1" fill="#3d5078"/>
<text x="431.8" y="142.7" font-family="Liberation Sans, sans-serif" font-size="9.2" fill="#3d5078" text-anchor="middle">6</text>
<rect x="440.76" y="139" width="1" height="1" fill="#3d5078"/>
<rect x="450.28" y="137.4" width="0.9" height="4.2" fill="#3d5078"/>
<rect x="459.69" y="139" width="1" height="1" fill="#3d5078"/>
<text x="469.6" y="142.7" font-family="Liberation Sans, sans-serif" font-size="9.2" fill="#3d5078" text-anchor="middle">7</text>
<rect x="478.61" y="139" width="1" height="1" fill="#3d5078"/>
<rect x="488.12" y="137.4" width="0.9" height="4.2" fill="#3d5078"/>
<rect x="497.54" y="139" width="1" height="1" fill="#3d5078"/>
<text x="507.5" y="142.7" font-family="Liberation Sans, sans-serif" font-size="9.2" fill="#3d5078" text-anchor="middle">8</text>
<rect x="516.46" y="139" width="1" height="1" fill="#3d5078"/>
<rect x="525.97" y="137.4" width="0.9" height="4.2" fill="#3d5078"/>
<rect x="535.39" y="139" width="1" height="1" fill="#3d5078"/>
<text x="545.4" y="142.7" font-family="Liberation Sans, sans-serif" font-size="9.2" fill="#3d5078" text-anchor="middle">9</text>
<rect x="554.31" y="139" width="1" height="1" fill="#3d5078"/>
<rect x="563.82" y="137.4" width="0.9" height="4.2" fill="#3d5078"/>
<rect x="573.24" y="139" width="1" height="1" fill="#3d5078"/>
<text x="583.2" y="142.7" font-family="Liberation Sans, sans-serif" font-size="9.2" fill="#3d5078" text-anchor="middle">10</text>
<rect x="592.16" y="139" width="1" height="1" fill="#3d5078"/>
<rect x="601.67" y="137.4" width="0.9" height="4.2" fill="#3d5078"/>
<rect x="611.09" y="139" width="1" height="1" fill="#3d5078"/>
<text x="621.0" y="142.7" font-family="Liberation Sans, sans-serif" font-size="9.2" fill="#3d5078" text-anchor="middle">11</text>
<rect x="630.01" y="139" width="1" height="1" fill="#3d5078"/>
<rect x="639.52" y="137.4" width="0.9" height="4.2" fill="#3d5078"/>
<rect x="648.94" y="139" width="1" height="1" fill="#3d5078"/>
<text x="658.9" y="142.7" font-family="Liberation Sans, sans-serif" font-size="9.2" fill="#3d5078" text-anchor="middle">12</text>
<rect x="667.86" y="139" width="1" height="1" fill="#3d5078"/>
<rect x="677.38" y="137.4" width="0.9" height="4.2" fill="#3d5078"/>
<rect x="686.79" y="139" width="1" height="1" fill="#3d5078"/>
<text x="696.8" y="142.7" font-family="Liberation Sans, sans-serif" font-size="9.2" fill="#3d5078" text-anchor="middle">13</text>
<rect x="705.71" y="139" width="1" height="1" fill="#3d5078"/>
<rect x="715.22" y="137.4" width="0.9" height="4.2" fill="#3d5078"/>
<rect x="724.64" y="139" width="1" height="1" fill="#3d5078"/>
<text x="734.6" y="142.7" font-family="Liberation Sans, sans-serif" font-size="9.2" fill="#3d5078" text-anchor="middle">14</text>
<rect x="743.56" y="139" width="1" height="1" fill="#3d5078"/>
<rect x="753.08" y="137.4" width="0.9" height="4.2" fill="#3d5078"/>
<rect x="762.49" y="139" width="1" height="1" fill="#3d5078"/>
<text x="772.5" y="142.7" font-family="Liberation Sans, sans-serif" font-size="9.2" fill="#3d5078" text-anchor="middle">15</text>
<rect x="781.41" y="139" width="1" height="1" fill="#3d5078"/>
<rect x="790.92" y="137.4" width="0.9" height="4.2" fill="#3d5078"/>
<rect x="800.34" y="139" width="1" height="1" fill="#3d5078"/>
<text x="810.3" y="142.7" font-family="Liberation Sans, sans-serif" font-size="9.2" fill="#3d5078" text-anchor="middle">16</text>
<rect x="819.26" y="139" width="1" height="1" fill="#3d5078"/>
<rect x="828.77" y="137.4" width="0.9" height="4.2" fill="#3d5078"/>
<rect x="838.19" y="139" width="1" height="1" fill="#3d5078"/>
<text x="848.2" y="142.7" font-family="Liberation Sans, sans-serif" font-size="9.2" fill="#3d5078" text-anchor="middle">17</text>
<rect x="857.11" y="139" width="1" height="1" fill="#3d5078"/>
<rect x="866.62" y="137.4" width="0.9" height="4.2" fill="#3d5078"/>
<rect x="876.04" y="139" width="1" height="1" fill="#3d5078"/>
<rect x="251.51" y="146" width="1" height="1.6" fill="#5b6f94"/>
<rect x="298.82" y="146" width="1" height="1.6" fill="#5b6f94"/>
<rect x="346.14" y="146" width="1" height="1.6" fill="#5b6f94"/>
<rect x="393.45" y="146" width="1" height="1.6" fill="#5b6f94"/>
<rect x="440.76" y="146" width="1" height="1.6" fill="#5b6f94"/>
<rect x="488.07" y="146" width="1" height="1.6" fill="#5b6f94"/>
<rect x="535.39" y="146" width="1" height="1.6" fill="#5b6f94"/>
<rect x="582.70" y="146" width="1" height="1.6" fill="#5b6f94"/>
<rect x="630.01" y="146" width="1" height="1.6" fill="#5b6f94"/>
<rect x="677.33" y="146" width="1" height="1.6" fill="#5b6f94"/>
<rect x="724.64" y="146" width="1" height="1.6" fill="#5b6f94"/>
<rect x="771.95" y="146" width="1" height="1.6" fill="#5b6f94"/>
<rect x="819.26" y="146" width="1" height="1.6" fill="#5b6f94"/>
<path d="M201.1 132.6 h7.2 v1.4 l-3.6 3.8 l-3.6 -3.8 z" fill="#eef3fa" stroke="#7f96bb" stroke-width="0.8"/>
<path d="M204.7 141.2 l3.6 3.4 v1.6 h-7.2 v-1.6 z" fill="#eef3fa" stroke="#7f96bb" stroke-width="0.8"/>
<rect x="201.1" y="146.2" width="7.2" height="3.2" fill="#eef3fa" stroke="#7f96bb" stroke-width="0.8"/>
<path d="M829.3 139.6 l3.6 3.6 v1.8 h-7.2 v-1.8 z" fill="#eef3fa" stroke="#7f96bb" stroke-width="0.8"/>
</svg>
<div class="abs" style="left:54px;top:131px;width:18px;height:18px;box-sizing:border-box;border:1px solid #a9bedb;background:#cfdcee;"></div>
<div class="abs" style="left:57px;top:134px;width:12px;height:12px;box-sizing:border-box;border:1px solid #b4c6de;background:#edf2f9;"></div>
<svg class="abs" style="left:57px;top:134px" width="12" height="12" viewBox="0 0 12 12"><path d="M4 3.6 v4.6 h4.4" fill="none" stroke="#2b3f66" stroke-width="1.4"/></svg>
<div class="abs" style="left:56px;top:166px;width:12px;height:503px;box-sizing:border-box;background:#e4ecf7;border:1px solid #a9bedb;border-bottom:none;"></div>
<div class="abs" style="left:57px;top:167px;width:10px;height:76px;background:#cbd9ec;border-bottom:1px solid #a9bedb;box-sizing:border-box"></div>
<svg class="abs" style="left:53px;top:160px" width="18" height="509" viewBox="53 160 18 509">
<text transform="translate(65.2 167.3) rotate(-90)" font-family="Liberation Sans, sans-serif" font-size="9.2" fill="#3d5078" text-anchor="middle">2</text>
<rect x="61.6" y="176.26" width="1" height="1" fill="#3d5078"/>
<rect x="60" y="185.78" width="4.2" height="0.9" fill="#3d5078"/>
<rect x="61.6" y="195.19" width="1" height="1" fill="#3d5078"/>
<text transform="translate(65.2 205.2) rotate(-90)" font-family="Liberation Sans, sans-serif" font-size="9.2" fill="#3d5078" text-anchor="middle">1</text>
<rect x="61.6" y="214.11" width="1" height="1" fill="#3d5078"/>
<rect x="60" y="223.62" width="4.2" height="0.9" fill="#3d5078"/>
<rect x="61.6" y="233.04" width="1" height="1" fill="#3d5078"/>
<rect x="61.6" y="251.96" width="1" height="1" fill="#3d5078"/>
<rect x="60" y="261.48" width="4.2" height="0.9" fill="#3d5078"/>
<rect x="61.6" y="270.89" width="1" height="1" fill="#3d5078"/>
<text transform="translate(65.2 280.9) rotate(-90)" font-family="Liberation Sans, sans-serif" font-size="9.2" fill="#3d5078" text-anchor="middle">1</text>
<rect x="61.6" y="289.81" width="1" height="1" fill="#3d5078"/>
<rect x="60" y="299.32" width="4.2" height="0.9" fill="#3d5078"/>
<rect x="61.6" y="308.74" width="1" height="1" fill="#3d5078"/>
<text transform="translate(65.2 318.7) rotate(-90)" font-family="Liberation Sans, sans-serif" font-size="9.2" fill="#3d5078" text-anchor="middle">2</text>
<rect x="61.6" y="327.66" width="1" height="1" fill="#3d5078"/>
<rect x="60" y="337.18" width="4.2" height="0.9" fill="#3d5078"/>
<rect x="61.6" y="346.59" width="1" height="1" fill="#3d5078"/>
<text transform="translate(65.2 356.6) rotate(-90)" font-family="Liberation Sans, sans-serif" font-size="9.2" fill="#3d5078" text-anchor="middle">3</text>
<rect x="61.6" y="365.51" width="1" height="1" fill="#3d5078"/>
<rect x="60" y="375.03" width="4.2" height="0.9" fill="#3d5078"/>
<rect x="61.6" y="384.44" width="1" height="1" fill="#3d5078"/>
<text transform="translate(65.2 394.4) rotate(-90)" font-family="Liberation Sans, sans-serif" font-size="9.2" fill="#3d5078" text-anchor="middle">4</text>
<rect x="61.6" y="403.36" width="1" height="1" fill="#3d5078"/>
<rect x="60" y="412.88" width="4.2" height="0.9" fill="#3d5078"/>
<rect x="61.6" y="422.29" width="1" height="1" fill="#3d5078"/>
<text transform="translate(65.2 432.2) rotate(-90)" font-family="Liberation Sans, sans-serif" font-size="9.2" fill="#3d5078" text-anchor="middle">5</text>
<rect x="61.6" y="441.21" width="1" height="1" fill="#3d5078"/>
<rect x="60" y="450.73" width="4.2" height="0.9" fill="#3d5078"/>
<rect x="61.6" y="460.14" width="1" height="1" fill="#3d5078"/>
<text transform="translate(65.2 470.1) rotate(-90)" font-family="Liberation Sans, sans-serif" font-size="9.2" fill="#3d5078" text-anchor="middle">6</text>
<rect x="61.6" y="479.06" width="1" height="1" fill="#3d5078"/>
<rect x="60" y="488.57" width="4.2" height="0.9" fill="#3d5078"/>
<rect x="61.6" y="497.99" width="1" height="1" fill="#3d5078"/>
<text transform="translate(65.2 507.9) rotate(-90)" font-family="Liberation Sans, sans-serif" font-size="9.2" fill="#3d5078" text-anchor="middle">7</text>
<rect x="61.6" y="516.91" width="1" height="1" fill="#3d5078"/>
<rect x="60" y="526.42" width="4.2" height="0.9" fill="#3d5078"/>
<rect x="61.6" y="535.84" width="1" height="1" fill="#3d5078"/>
<text transform="translate(65.2 545.8) rotate(-90)" font-family="Liberation Sans, sans-serif" font-size="9.2" fill="#3d5078" text-anchor="middle">8</text>
<rect x="61.6" y="554.76" width="1" height="1" fill="#3d5078"/>
<rect x="60" y="564.27" width="4.2" height="0.9" fill="#3d5078"/>
<rect x="61.6" y="573.69" width="1" height="1" fill="#3d5078"/>
<text transform="translate(65.2 583.7) rotate(-90)" font-family="Liberation Sans, sans-serif" font-size="9.2" fill="#3d5078" text-anchor="middle">9</text>
<rect x="61.6" y="592.61" width="1" height="1" fill="#3d5078"/>
<rect x="60" y="602.12" width="4.2" height="0.9" fill="#3d5078"/>
<rect x="61.6" y="611.54" width="1" height="1" fill="#3d5078"/>
<text transform="translate(65.2 621.5) rotate(-90)" font-family="Liberation Sans, sans-serif" font-size="9.2" fill="#3d5078" text-anchor="middle">10</text>
<rect x="61.6" y="630.46" width="1" height="1" fill="#3d5078"/>
<rect x="60" y="639.97" width="4.2" height="0.9" fill="#3d5078"/>
<rect x="61.6" y="649.39" width="1" height="1" fill="#3d5078"/>
<text transform="translate(65.2 659.4) rotate(-90)" font-family="Liberation Sans, sans-serif" font-size="9.2" fill="#3d5078" text-anchor="middle">11</text>
<rect x="61.6" y="668.31" width="1" height="1" fill="#3d5078"/>
</svg>
<!--RULER_END-->
<!-- document text -->
<div class="abs t" id="doctext" style="filter:grayscale(1);left:205.6px;top:247px;font-size:21.9px;color:#111;transform:scaleY(0.97);transform-origin:0 17.8px;">Кознить нельзя, помиловать.</div>
<svg class="abs" style="left:204px;top:265px" width="88" height="6" viewBox="0 0 88 6"><path d="M0.7 3.9 l1.25 -1.8 l1.25 1.8 l1.25 -1.8 l1.25 1.8 l1.25 -1.8 l1.25 1.8 l1.25 -1.8 l1.25 1.8 l1.25 -1.8 l1.25 1.8 l1.25 -1.8 l1.25 1.8 l1.25 -1.8 l1.25 1.8 l1.25 -1.8 l1.25 1.8 l1.25 -1.8 l1.25 1.8 l1.25 -1.8 l1.25 1.8 l1.25 -1.8 l1.25 1.8 l1.25 -1.8 l1.25 1.8 l1.25 -1.8 l1.25 1.8 l1.25 -1.8 l1.25 1.8 l1.25 -1.8 l1.25 1.8 l1.25 -1.8 l1.25 1.8 l1.25 -1.8 l1.25 1.8 l1.25 -1.8 l1.25 1.8 l1.25 -1.8 l1.25 1.8 l1.25 -1.8 l1.25 1.8 l1.25 -1.8 l1.25 1.8 l1.25 -1.8 l1.25 1.8 l1.25 -1.8 l1.25 1.8 l1.25 -1.8 l1.25 1.8 l1.25 -1.8 l1.25 1.8 l1.25 -1.8 l1.25 1.8 l1.25 -1.8 l1.25 1.8 l1.25 -1.8 l1.25 1.8 l1.25 -1.8 l1.25 1.8 l1.25 -1.8 l1.25 1.8 l1.25 -1.8 l1.25 1.8 l1.25 -1.8 l1.25 1.8 l1.25 -1.8 l1.25 1.8 l1.25 -1.8" fill="none" stroke="#f25d5d" stroke-width="0.95"/></svg>
<div class="abs" style="left:205.6px;top:290px;width:1.1px;height:17px;background:#222;"></div>

<!-- vertical scrollbar -->
<div class="abs" style="left:893.5px;top:128px;width:13.5px;height:541px;background:linear-gradient(#c6d6eb 0px,#c6d6eb 24px,rgba(198,214,235,0) 170px),linear-gradient(90deg,#a4bad8,#b2c7e2 45%,#bbcee7);"></div>
<div class="abs" style="left:896px;top:132.4px;width:7px;height:1.2px;background:#7f95b8;"></div>
<div class="abs" style="left:894px;top:135px;width:13px;height:13.5px;box-sizing:border-box;border:1px solid #7f97bd;background:#b4c8e3;"></div>
<svg class="abs" style="left:894px;top:135px" width="13" height="14" viewBox="0 0 13 14"><path d="M3 4 l2 -1.4 l2 1.6 l3 -0.4 v4 l-2.4 0.6 l-0.6 1.6 l-2 -0.6 l-2 -1.2 z" fill="#f4eef0" stroke="#b9a9a0" stroke-width="0.6"/></svg>
<svg class="abs" style="left:894px;top:150px" width="13" height="10" viewBox="0 0 13 10"><path d="M2.4 6.8 L6.3 3 L10.2 6.8 Z" fill="#3f4c73"/></svg>
<div class="abs" style="left:894px;top:161.5px;width:12.5px;height:203.5px;box-sizing:border-box;border:1px solid #7e98be;border-radius:2px;background:linear-gradient(90deg,#c4d6ee 0%,#b3c8e3 40%,#9fb8d8 100%);"></div>
<div class="abs" style="left:898px;top:260px;width:5px;height:6px;background:#93a8c8;opacity:.8"></div>
<svg class="abs" style="left:894px;top:616px" width="13" height="53" viewBox="0 0 13 53">
  <rect x="0" y="11.6" width="13" height="41.4" fill="#b9cce6"/>
  <path d="M2.2 4 L6.3 8.2 L10.4 4 Z" fill="#3f4c73"/>
  <path d="M6.3 16 l2.2 2.2 h-4.4 z M6.3 18.4 l2.2 2.2 h-4.4 z" fill="#3b4256"/>
  <circle cx="6.3" cy="32.6" r="2.1" fill="#d5dbe6" stroke="#4d566b" stroke-width="0.8"/>
  <path d="M6.3 48.4 l2.2 -2.2 h-4.4 z M6.3 46 l2.2 -2.2 h-4.4 z" fill="#3b4256"/>
</svg>
<!-- horizontal scrollbar -->
<div class="abs" style="left:53px;top:669px;width:841px;height:14px;background:linear-gradient(#b9cce5,#c1d2e9);border-top:1px solid #93aacb;box-sizing:border-box;"></div>
<div class="abs" style="left:65.5px;top:669.5px;width:800px;height:12.5px;box-sizing:border-box;border:1px solid #7e98be;border-radius:2px;background:linear-gradient(#bccfe8 0%,#a9c0de 45%,#9db6d7 100%);"></div>
<svg class="abs" style="left:53px;top:669px" width="841" height="14" viewBox="0 0 841 14">
  <path d="M9.6 2.6 L4.6 6.6 L9.6 10.6 Z" fill="#3f4c73"/>
  <path d="M832.6 2.6 L837.6 6.6 L832.6 10.6 Z" fill="#3f4c73"/>
  <g fill="#8fa6c8"><rect x="410" y="5" width="1" height="4"/><rect x="412" y="5" width="1" height="4"/><rect x="414" y="5" width="1" height="4"/></g>
</svg>
<div class="abs" style="left:893.5px;top:669px;width:13.5px;height:14px;background:#b9cce6;"></div>

<!-- STATUS BAR -->
<div class="abs" style="left:53px;top:683px;width:854px;height:17px;background:linear-gradient(#d9e4f2 0%,#cfdcee 45%,#c0d1e8 55%,#c6d6eb 100%);border-top:1px solid #a3b8d6;box-sizing:border-box;"></div>
<div class="abs t" style="left:59px;top:688px;font-size:8.5px;color:#1e395b">Страница: 1 из 1</div>
<div class="abs t" style="left:136.5px;top:688px;font-size:8.5px;color:#1e395b">Число слов: 3</div>
<div class="abs t" style="left:228.6px;top:688px;font-size:8.5px;color:#1e395b">русский</div>
<div class="abs t" style="left:767.5px;top:688px;font-size:8.5px;color:#1e395b">120%</div>
<div class="abs" style="left:686px;top:684px;width:15px;height:15px;box-sizing:border-box;border:1px solid #e5b84a;border-radius:2px;background:linear-gradient(#fde68f,#fddb70 45%,#fcd258 52%,#fde286);"></div>
<svg class="abs" style="left:53px;top:683px" width="854" height="17" viewBox="53 683 854 17">
  <g fill="#aabdd8"><rect x="129.4" y="685" width="1" height="13"/><rect x="198.4" y="685" width="1" height="13"/><rect x="265.6" y="685" width="1" height="13"/><rect x="291" y="685" width="1" height="13"/><rect x="681.6" y="685" width="1" height="13"/></g>
  <g fill="#eef3fa"><rect x="130.4" y="685" width="1" height="13"/><rect x="199.4" y="685" width="1" height="13"/><rect x="266.6" y="685" width="1" height="13"/><rect x="292" y="685" width="1" height="13"/><rect x="682.6" y="685" width="1" height="13"/></g>
  <!-- proofing icon -->
  <path d="M204 692.6 l6 -3 l6 2.6 l-6 3.6 z" fill="#eef3fb" stroke="#3d62b0" stroke-width="0.9"/><path d="M204 692.8 v1.4 l6 3.4 l6 -3.6 v-1.6 l-6 3.6 z" fill="#4a78cc"/>
  <path d="M204 692.6 v1.6 l6 3.4 l6 -3.6 v-1.8" fill="none" stroke="#3d62b0" stroke-width="0.9"/>
  <path d="M210.6 685.6 l5.4 5.6 M216.2 685.6 l-5.6 5.6" stroke="#e03a2a" stroke-width="1.5" stroke-linecap="round"/>
  <!-- macro icon -->
  <rect x="273.8" y="686.8" width="8.6" height="7.6" fill="#f7f9fc" stroke="#6d7f9f" stroke-width="0.8"/>
  <rect x="273.8" y="686.8" width="8.6" height="2" fill="#5a78b8"/>
  <circle cx="275" cy="687.6" r="1.5" fill="#e0392b"/>
  <g fill="#7b8cab"><rect x="275.4" y="690" width="1.2" height="3.4"/><rect x="277.6" y="690" width="1.2" height="3.4"/><rect x="279.8" y="690" width="1.2" height="3.4"/></g>
  <!-- view buttons -->
  <rect x="689" y="687" width="9" height="9" fill="#cfcbbd" stroke="#5f5b50" stroke-width="0.9"/>
  <g fill="#5f5b50"><rect x="689" y="689.2" width="9" height="0.9"/><rect x="689" y="692.9" width="9" height="0.9"/></g>
  <rect x="690.4" y="690.4" width="6.2" height="2.2" fill="#e9e4d2"/>
  <path d="M704.4 688 l4 1 l4 -1 v7.6 l-4 1 l-4 -1 z" fill="#d5d8dd" stroke="#6b717c" stroke-width="0.9"/>
  <path d="M708.4 689 v7.6 M706.4 689.2 v6.6 M710.4 689.2 v6.6" fill="none" stroke="#7d838e" stroke-width="0.7"/>
  <rect x="718.6" y="687" width="7.6" height="8.4" fill="#d5d8dd" stroke="#6b717c" stroke-width="0.9"/>
  <g fill="#7d838e"><rect x="720" y="689" width="4.8" height="0.9"/><rect x="720" y="691" width="4.8" height="0.9"/></g>
  <circle cx="726" cy="694.8" r="2.5" fill="#2f7fd0" stroke="#1f4f8a" stroke-width="0.5"/>
  <path d="M724.6 694 c1 -1.4 2.4 -0.6 2 0.6 c-0.4 1 -1.6 0.6 -2 -0.6z" fill="#4fae4a"/>
  <g fill="#8d95a5"><rect x="735" y="687.4" width="7" height="0.9"/><rect x="737.4" y="689.8" width="4.6" height="0.9"/><rect x="737.4" y="692.2" width="4.6" height="0.9"/><rect x="739" y="694.6" width="3" height="0.9"/><rect x="734" y="687.4" width="0.9" height="0.9"/><rect x="735.8" y="689.8" width="0.9" height="0.9"/><rect x="735.8" y="692.2" width="0.9" height="0.9"/></g>
  <g fill="#7d838e"><rect x="749" y="687.4" width="8.6" height="1.2"/><rect x="749" y="689.8" width="8.6" height="1.2"/><rect x="749" y="692.2" width="8.6" height="1.2"/><rect x="749" y="694.6" width="8.6" height="1.2"/></g>
  <!-- zoom slider -->
  <rect x="808" y="690.4" width="82" height="1" fill="#7f93b3"/>
  <rect x="808" y="691.4" width="82" height="1" fill="#eef3fa"/>
  <circle cx="801" cy="691" r="6" fill="#f1f5fb" stroke="#7888a4" stroke-width="0.9"/>
  <rect x="797.8" y="690.4" width="6.4" height="1.4" fill="#3b4660"/>
  <circle cx="897.4" cy="691" r="6" fill="#f1f5fb" stroke="#7888a4" stroke-width="0.9"/>
  <rect x="894.2" y="690.3" width="6.4" height="1.4" fill="#3b4660"/><rect x="896.7" y="687.8" width="1.4" height="6.4" fill="#3b4660"/>
  <path d="M848.8 686 h5.4 v8 l-2.7 3 l-2.7 -3 z" fill="#f2f5fa" stroke="#76839b" stroke-width="0.8"/>
</svg>

</div></div>
<svg class="abs" style="left:140px;top:260px" width="120" height="200" viewBox="140 260 120 200">
  <path d="M159 398.4 H181.4 L246.8 269.6 L193.8 398.6 A9.2 9.2 0 0 1 202.4 407.6 V442.1 A9.2 9.2 0 0 1 193.2 451.3 H159.8 A9.2 9.2 0 0 1 150.6 442.1 V407.6 A9.2 9.2 0 0 1 159.8 398.4 Z" fill="#dbeef4" stroke="#385d8a" stroke-width="3" stroke-linejoin="miter" stroke-miterlimit="4"/>
  <text style="filter:grayscale(1)" transform="translate(176.6 431.6) scale(0.8 1)" font-family="Liberation Sans, sans-serif" font-weight="bold" font-size="21.6" fill="#000" text-anchor="middle">?</text>
</svg>

</body>
</html>
